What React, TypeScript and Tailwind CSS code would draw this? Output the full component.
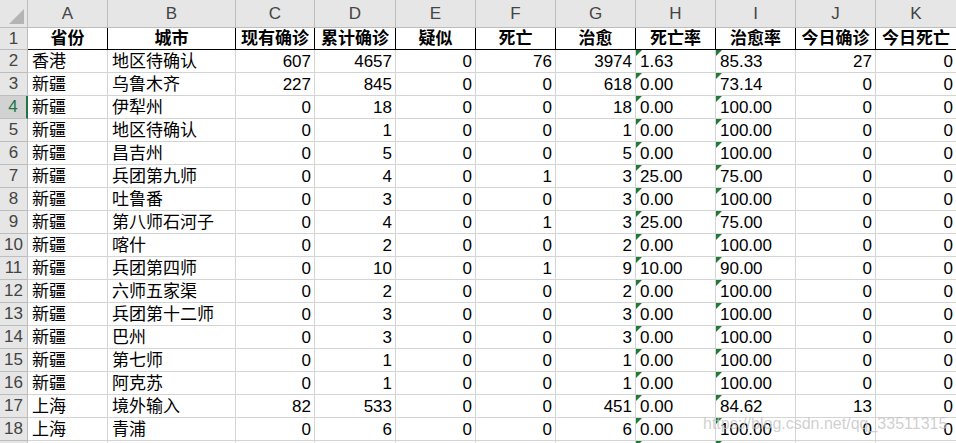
import React from "react";

const cols = ["A", "B", "C", "D", "E", "F", "G", "H", "I", "J", "K"];
const widths = ["w-[80px]", "w-[128px]", "w-[79px]", "w-[81px]", "w-[80px]", "w-[80px]", "w-[80px]", "w-[80px]", "w-[80px]", "w-[80px]", "w-[81px]"];
const titles = ["省份", "城市", "现有确诊", "累计确诊", "疑似", "死亡", "治愈", "死亡率", "治愈率", "今日确诊", "今日死亡"];

const rows: string[][] = [
  ["香港", "地区待确认", "607", "4657", "0", "76", "3974", "1.63", "85.33", "27", "0"],
  ["新疆", "乌鲁木齐", "227", "845", "0", "0", "618", "0.00", "73.14", "0", "0"],
  ["新疆", "伊犁州", "0", "18", "0", "0", "18", "0.00", "100.00", "0", "0"],
  ["新疆", "地区待确认", "0", "1", "0", "0", "1", "0.00", "100.00", "0", "0"],
  ["新疆", "昌吉州", "0", "5", "0", "0", "5", "0.00", "100.00", "0", "0"],
  ["新疆", "兵团第九师", "0", "4", "0", "1", "3", "25.00", "75.00", "0", "0"],
  ["新疆", "吐鲁番", "0", "3", "0", "0", "3", "0.00", "100.00", "0", "0"],
  ["新疆", "第八师石河子", "0", "4", "0", "1", "3", "25.00", "75.00", "0", "0"],
  ["新疆", "喀什", "0", "2", "0", "0", "2", "0.00", "100.00", "0", "0"],
  ["新疆", "兵团第四师", "0", "10", "0", "1", "9", "10.00", "90.00", "0", "0"],
  ["新疆", "六师五家渠", "0", "2", "0", "0", "2", "0.00", "100.00", "0", "0"],
  ["新疆", "兵团第十二师", "0", "3", "0", "0", "3", "0.00", "100.00", "0", "0"],
  ["新疆", "巴州", "0", "3", "0", "0", "3", "0.00", "100.00", "0", "0"],
  ["新疆", "第七师", "0", "1", "0", "0", "1", "0.00", "100.00", "0", "0"],
  ["新疆", "阿克苏", "0", "1", "0", "0", "1", "0.00", "100.00", "0", "0"],
  ["上海", "境外输入", "82", "533", "0", "0", "451", "0.00", "84.62", "13", "0"],
  ["上海", "青浦", "0", "6", "0", "0", "6", "0.00", "100.00", "0", "0"],
];

function Flag() {
  return <span className="absolute left-0 top-0 h-[6px] w-[6px] bg-[#1e7a34] [clip-path:polygon(0_0,100%_0,0_100%)]" />;
}

export default function App() {
  return (
    <div className="relative h-[443px] w-[956px] overflow-hidden bg-white font-['Liberation_Sans','Noto_Sans_CJK_SC',sans-serif] text-[17px] text-black">
      {/* column letters */}
      <div className="flex h-[28px]">
        <div className="relative w-[28px] shrink-0 border-b border-r border-[#bdbdbd] bg-[#e6e6e6]">
          <span className="absolute bottom-[3px] right-[3px] h-[15px] w-[15px] bg-[#b4b4b4] [clip-path:polygon(100%_0,100%_100%,0_100%)]" />
        </div>
        {cols.map((c, i) => (
          <div key={c} className={`${widths[i]} flex shrink-0 items-center justify-center border-b border-r border-[#bdbdbd] bg-[#e6e6e6] text-[#444]`}>
            {c}
          </div>
        ))}
      </div>

      {/* row 1: titles */}
      <div className="flex h-[22px]">
        <div className="flex w-[28px] shrink-0 items-center justify-center border-b border-r border-[#bdbdbd] bg-[#e6e6e6] text-[#444]">1</div>
        {titles.map((t, i) => (
          <div key={t} className={`${widths[i]} flex shrink-0 items-center justify-center border-b border-r border-black font-bold leading-none`}>
            {t}
          </div>
        ))}
      </div>

      {rows.map((r, ri) => {
        const active = ri === 2;
        return (
          <div key={ri} className="flex h-[23px]">
            <div
              className={`flex w-[28px] shrink-0 items-center justify-center border-b border-[#bdbdbd] ${
                active ? "border-r-2 border-r-[#217346] bg-[#d2d2d2] text-[#217346]" : "border-r bg-[#e6e6e6] text-[#444]"
              }`}
            >
              {ri + 2}
            </div>
            {r.map((v, ci) => {
              const left = ci < 2 || ci === 7 || ci === 8;
              return (
                <div
                  key={ci}
                  className={`${widths[ci]} relative flex shrink-0 items-center border-b border-r border-[#d4d4d4] leading-none ${
                    left ? "justify-start pl-[4px]" : "justify-end pr-[3px]"
                  }`}
                >
                  {(ci === 7 || ci === 8) && <Flag />}
                  {v}
                </div>
              );
            })}
          </div>
        );
      })}

      {/* partly visible row 19 */}
      <div className="flex h-[23px]">
        <div className="w-[28px] shrink-0 border-r border-[#bdbdbd] bg-[#e6e6e6]" />
        {widths.map((w, ci) => (
          <div key={ci} className={`${w} relative shrink-0 border-r border-[#d4d4d4]`}>
            {(ci === 7 || ci === 8) && <Flag />}
          </div>
        ))}
      </div>

      {/* blog watermark */}
      <div className="pointer-events-none absolute left-[703px] top-[412px] text-[16px] text-[#c4c4c4]/80">
        https://blog.csdn.net/qq_33511315
      </div>
    </div>
  );
}
